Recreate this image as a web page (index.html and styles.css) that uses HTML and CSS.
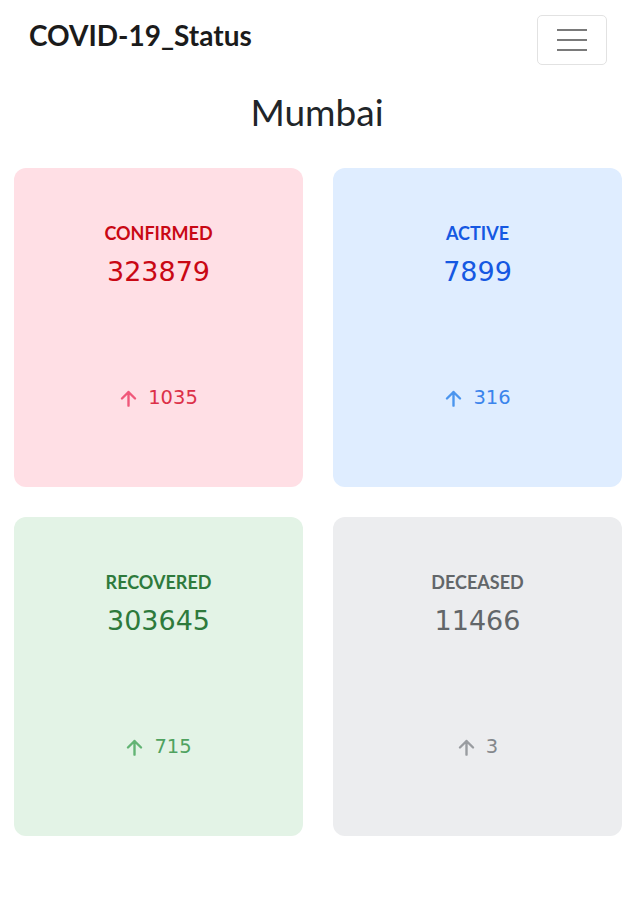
FILE: index.html
```html
<!DOCTYPE html>
<html lang="en">
<head>
<meta charset="utf-8">
<title>COVID-19_Status</title>
<link rel="stylesheet" href="styles.css">
</head>
<body>
<nav class="navbar">
  <a class="brand" href="#">COVID-19_Status</a>
  <button class="toggler" type="button" aria-label="Toggle navigation">
    <span class="bar"></span><span class="bar"></span><span class="bar"></span>
  </button>
</nav>
<h1 class="city">Mumbai</h1>
<main class="grid">
  <section class="card confirmed">
    <div class="label">CONFIRMED</div>
    <div class="count">323879</div>
    <div class="delta"><svg class="arrow" viewBox="0 0 16 16"><path d="M8 14V2.5M2.5 8L8 2.5L13.5 8"/></svg><span>1035</span></div>
  </section>
  <section class="card active">
    <div class="label">ACTIVE</div>
    <div class="count">7899</div>
    <div class="delta"><svg class="arrow" viewBox="0 0 16 16"><path d="M8 14V2.5M2.5 8L8 2.5L13.5 8"/></svg><span>316</span></div>
  </section>
  <section class="card recovered">
    <div class="label">RECOVERED</div>
    <div class="count">303645</div>
    <div class="delta"><svg class="arrow" viewBox="0 0 16 16"><path d="M8 14V2.5M2.5 8L8 2.5L13.5 8"/></svg><span>715</span></div>
  </section>
  <section class="card deceased">
    <div class="label">DECEASED</div>
    <div class="count">11466</div>
    <div class="delta"><svg class="arrow" viewBox="0 0 16 16"><path d="M8 14V2.5M2.5 8L8 2.5L13.5 8"/></svg><span>3</span></div>
  </section>
</main>
</body>
</html>
```
FILE: styles.css
```css
html, body {
  margin: 0;
  padding: 0;
  background: #ffffff;
}
body {
  font-family: "Lato", "DejaVu Sans", sans-serif;
  color: #212529;
}
.navbar {
  display: flex;
  align-items: center;
  justify-content: space-between;
  padding: 15px 27px 0 29px;
  height: 50px;
}
.brand {
  font-family: "Lato", sans-serif;
  font-weight: 700;
  font-size: 28px;
  letter-spacing: 0;
  color: #1b1b1b;
  text-decoration: none;
  align-self: flex-start;
  line-height: 40px;
}
.toggler {
  width: 70px;
  height: 50px;
  border: 1px solid #e2e2e2;
  border-radius: 5px;
  background: #ffffff;
  display: flex;
  flex-direction: column;
  align-items: center;
  justify-content: center;
  gap: 8px;
  padding: 0;
}
.bar {
  display: block;
  width: 30px;
  height: 2px;
  background: #7a7a7a;
}
.city {
  margin: 25px 0 0 0;
  text-align: center;
  font-family: "Lato", sans-serif;
  font-weight: 400;
  font-size: 37px;
  line-height: 44px;
  color: #212529;
}
.grid {
  display: grid;
  grid-template-columns: 289px 289px;
  column-gap: 30px;
  row-gap: 30px;
  padding: 34px 12px 0 14px;
}
.card {
  height: 319px;
  border-radius: 12px;
  display: flex;
  flex-direction: column;
  align-items: center;
  box-sizing: border-box;
  padding-top: 54px;
}
.label {
  font-family: "Lato", sans-serif;
  font-weight: 700;
  font-size: 18px;
  line-height: 22px;
}
.count {
  font-family: "DejaVu Sans", sans-serif;
  font-size: 27px;
  line-height: 32px;
  margin-top: 12px;
}
.delta {
  margin-top: 98px;
  display: flex;
  align-items: center;
  gap: 10px;
  font-family: "DejaVu Sans", sans-serif;
  font-size: 19.5px;
  line-height: 24px;
}
.arrow {
  width: 19px;
  height: 19px;
  fill: none;
  stroke: currentColor;
  stroke-width: 2;
  stroke-linecap: round;
  stroke-linejoin: round;
}
.confirmed { background: #ffdfe5; }
.confirmed .label, .confirmed .count { color: #c90814; }
.confirmed .delta { color: #dc3048; }
.confirmed .arrow { color: #f0587a; }

.active { background: #dfedff; }
.active .label, .active .count { color: #1558e2; }
.active .delta { color: #3a84ec; }
.active .arrow { color: #4b95ee; }

.recovered { background: #e3f3e6; }
.recovered .label, .recovered .count { color: #2e7a3c; }
.recovered .delta { color: #4fa25f; }
.recovered .arrow { color: #62b474; }

.deceased { background: #ecedef; }
.deceased .label, .deceased .count { color: #626669; }
.deceased .delta { color: #84888c; }
.deceased .arrow { color: #999ca0; }
```
